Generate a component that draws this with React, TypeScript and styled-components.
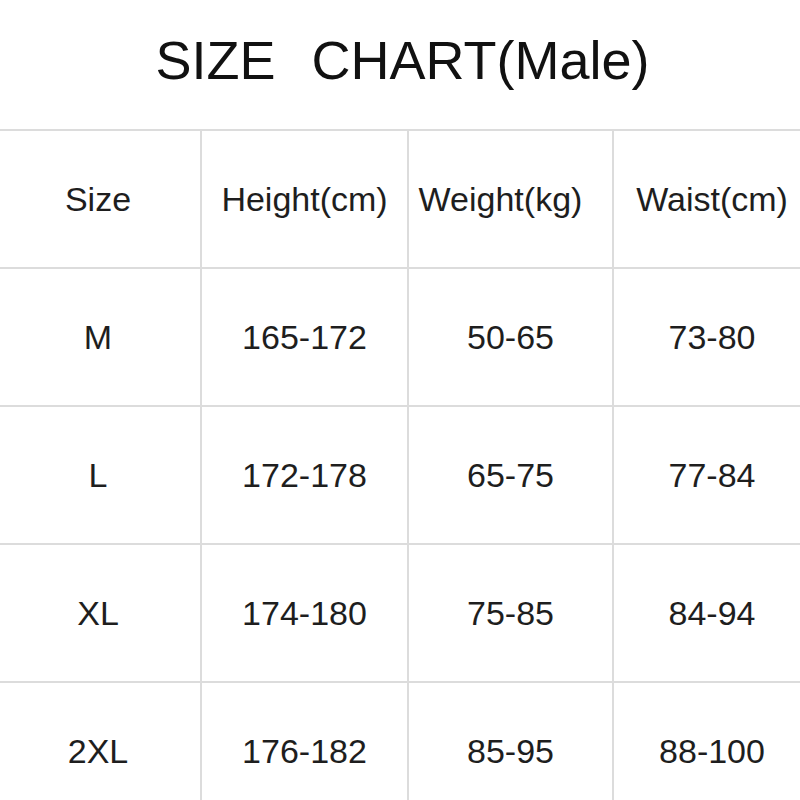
import React from "react";
import styled, { createGlobalStyle } from "styled-components";

const Global = createGlobalStyle`
  html, body { margin: 0; padding: 0; background: #ffffff; }
  body { font-family: "Liberation Sans", Arial, sans-serif; overflow: hidden; }
`;

const Page = styled.div`
  width: 800px;
  height: 800px;
  overflow: hidden;
  background: #ffffff;
  display: flex;
  flex-direction: column;
`;

const TitleBar = styled.div`
  box-sizing: border-box;
  height: 129px;
  padding-bottom: 10px;
  display: flex;
  align-items: center;
  justify-content: center;
  flex-shrink: 0;
`;

const Title = styled.h1`
  margin: 0;
  font-family: "Liberation Sans", Arial, sans-serif;
  font-weight: 400;
  font-size: 54px;
  line-height: 1;
  color: #111111;
  white-space: pre;
  word-spacing: 3px;
  padding-left: 5px;
`;

const Grid = styled.div`
  display: grid;
  grid-template-columns: 200px 207px 205px 198px;
  grid-auto-rows: 138px;
  width: 810px;
`;

const Cell = styled.div<{ $first?: boolean; $nudge?: number }>`
  box-sizing: border-box;
  border-top: 2px solid #dcdcdc;
  border-left: ${(p) => (p.$first ? "none" : "2px solid #dcdcdc")};
  display: flex;
  align-items: center;
  justify-content: center;
  padding-right: ${(p) => (p.$nudge ? `${p.$nudge}px` : "0")};
  font-size: 34px;
  color: #1e1e1e;
  white-space: nowrap;
`;

const headers: { label: string; nudge?: number }[] = [
  { label: "Size", nudge: 4 },
  { label: "Height(cm)" },
  { label: "Weight(kg)", nudge: 20 },
  { label: "Waist(cm)" },
];

const rows = [
  ["M", "165-172", "50-65", "73-80"],
  ["L", "172-178", "65-75", "77-84"],
  ["XL", "174-180", "75-85", "84-94"],
  ["2XL", "176-182", "85-95", "88-100"],
];

export default function App() {
  return (
    <Page>
      <Global />
      <TitleBar>
        <Title>{"SIZE  CHART(Male)"}</Title>
      </TitleBar>
      <Grid>
        {headers.map((h, i) => (
          <Cell key={h.label} $first={i === 0} $nudge={h.nudge}>
            {h.label}
          </Cell>
        ))}
        {rows.map((r, ri) =>
          r.map((c, ci) => (
            <Cell key={`${ri}-${ci}`} $first={ci === 0} $nudge={ci === 0 ? 4 : 0}>
              {c}
            </Cell>
          ))
        )}
      </Grid>
    </Page>
  );
}
